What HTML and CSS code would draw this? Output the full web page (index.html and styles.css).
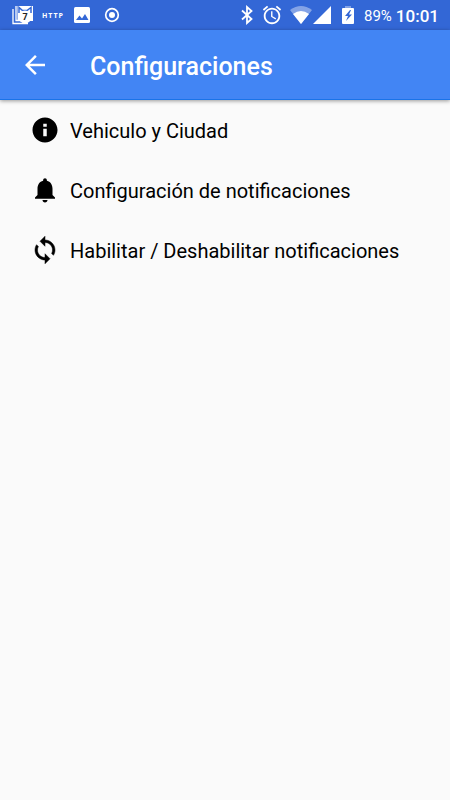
FILE: index.html
```html
<!DOCTYPE html>
<html lang="es">
<head>
    <meta charset="UTF-8">
    <meta name="viewport" content="width=device-width, initial-scale=1.0">
    <title>Configuraciones</title>
    <link rel="stylesheet" href="styles.css">
</head>
<body>
    <div class="status-bar">
        <div class="status-left">
            <svg class="icon-cat" viewBox="0 0 22 20" aria-hidden="true">
                <path d="M1 4v14.500h15" fill="none" stroke="#fff" stroke-width="1.300"/>
                <path d="M4 1v14.500h5" fill="none" stroke="#fff" stroke-width="1.300"/>
                <path d="M5.500 1H21v15H5.500z" fill="#fff"/>
                <path d="M7 8V2.500l3.500 3h4.500l4-3V8" fill="none" stroke="#3367d6" stroke-width="1.500"/>
                <circle cx="13" cy="12" r="6.500" fill="#fff"/>
                <text class="cat-count" x="13" y="15" text-anchor="middle">7</text>
            </svg>
            <span class="http">HTTP</span>
            <svg class="icon-photo" viewBox="0 0 18 18" aria-hidden="true">
                <rect x="1" y="1" width="16" height="16" rx="1.500" fill="#fff"/>
                <path d="M3 14l3.500-4.500 2.500 3 3-4.500 3.500 6z" fill="#3367d6"/>
            </svg>
            <svg class="icon-record" viewBox="0 0 16 16" aria-hidden="true">
                <circle cx="8" cy="8" r="6.300" fill="none" stroke="#fff" stroke-width="1.700"/>
                <circle cx="8" cy="8" r="3" fill="#fff"/>
            </svg>
        </div>
        <div class="status-right">
            <svg class="icon-bluetooth" viewBox="0 0 12 20" aria-hidden="true">
                <path d="M1 5.500l9.500 8.500L6 18V2l4.500 4L1 14.500" fill="none" stroke="#fff" stroke-width="1.800"/>
            </svg>
            <svg class="icon-alarm" viewBox="0 0 24 24" aria-hidden="true">
                <path d="M22 5.720l-4.600-3.860-1.290 1.530 4.600 3.860L22 5.720zM7.880 3.390L6.600 1.860 2 5.710l1.290 1.530 4.590-3.850zM12.500 8H11v6l4.750 2.850.75-1.230-4-2.370V8zM12 4c-4.970 0-9 4.030-9 9s4.020 9 9 9c4.970 0 9-4.030 9-9s-4.030-9-9-9zm0 16c-3.870 0-7-3.130-7-7s3.130-7 7-7 7 3.130 7 7-3.130 7-7 7z" fill="#fff"/>
            </svg>
            <svg class="icon-wifi" viewBox="0 0 24 20" aria-hidden="true">
                <path d="M1 5Q12-3 23 5L12 19z" fill="#fff" opacity=".4"/>
                <path d="M4 9q8-6 16 0l-8 10z" fill="#fff"/>
            </svg>
            <svg class="icon-signal" viewBox="0 0 18 18" aria-hidden="true">
                <path d="M18 0v18H0z" fill="#fff"/>
            </svg>
            <svg class="icon-battery" viewBox="0 0 12 20" aria-hidden="true">
                <path d="M3 1h6v2H3z" fill="#fff" opacity=".4"/>
                <path d="M1 3h10q1 0 1 1v14q0 1-1 1H1q-1 0-1-1V4q0-1 1-1z" fill="#fff"/>
                <path d="M8 5l-5 6h3l-2 5 6-6.500H7L9 5z" fill="#3367d6"/>
            </svg>
            <span class="battery-level">89%</span>
            <span class="clock">10:01</span>
        </div>
    </div>

    <header class="toolbar">
        <button class="back" type="button" aria-label="Volver">
            <svg viewBox="0 0 24 24" aria-hidden="true"><path d="M20 11H7.830l5.590-5.590L12 4l-8 8 8 8 1.410-1.410L7.830 13H20v-2z" fill="#fff"/></svg>
        </button>
        <h1>Configuraciones</h1>
    </header>

    <nav>
        <ul class="settings">
            <li>
                <a href="#vehiculo">
                    <svg viewBox="0 0 24 24" aria-hidden="true"><path d="M12 2C6.480 2 2 6.480 2 12s4.480 10 10 10 10-4.480 10-10S17.520 2 12 2zm1.400 15h-2.800v-6h2.800v6zm0-7.600h-2.800V7h2.800v2.400z"/></svg>
                    <span>Vehiculo y Ciudad</span>
                </a>
            </li>
            <li>
                <a href="#configuracion">
                    <svg viewBox="0 0 24 24" aria-hidden="true"><path d="M12 22c1.100 0 2-.9 2-2h-4c0 1.100.89 2 2 2zm6-6v-5c0-3.070-1.640-5.640-4.500-6.320V4c0-.83-.67-1.500-1.500-1.500s-1.500.67-1.500 1.500v.68C7.630 5.360 6 7.920 6 11v5l-2 2v1h16v-1l-2-2z"/></svg>
                    <span>Configuración de notificaciones</span>
                </a>
            </li>
            <li>
                <a href="#habilitar">
                    <svg viewBox="0 0 24 24" aria-hidden="true"><path d="M12 4V1L8 5l4 4V6c3.310 0 6 2.690 6 6 0 1.010-.25 1.970-.7 2.800l1.460 1.460C19.540 15.030 20 13.570 20 12c0-4.420-3.580-8-8-8zm0 14c-3.310 0-6-2.690-6-6 0-1.010.25-1.970.7-2.800L5.240 7.740C4.460 8.970 4 10.430 4 12c0 4.420 3.580 8 8 8v3l4-4-4-4v3z" stroke="#000" stroke-width=".4"/></svg>
                    <span>Habilitar / Deshabilitar notificaciones</span>
                </a>
            </li>
        </ul>
    </nav>
</body>
</html>
```

FILE: styles.css
```css
* { box-sizing: border-box; }
body { margin: 0; min-height: 100vh; background-color: #fafafa; color: #000; font-family: Roboto, "Noto Sans", sans-serif; }
svg { display: block; flex: none; }

/* status bar */
.status-bar { display: flex; justify-content: space-between; align-items: center; height: 30px; padding: 0 11px 0 12px; background-color: #3367d6; color: #fff; }
.status-left, .status-right { display: flex; align-items: center; }
.icon-cat { width: 22px; height: 20px; }
.cat-count { font-size: 9px; font-weight: bold; fill: #222; }
.http { margin: 0 9px 0 8px; font-family: "Open Sans", sans-serif; font-size: 7px; font-weight: bold; letter-spacing: 1px; }
.icon-photo { width: 18px; height: 18px; margin-right: 13px; }
.icon-record { width: 16px; height: 16px; }
.icon-bluetooth { width: 12px; height: 20px; margin-right: 8px; }
.icon-alarm { width: 22px; height: 22px; margin-right: 6px; }
.icon-wifi { width: 24px; height: 20px; }
.icon-signal { width: 18px; height: 18px; margin-right: 11px; }
.icon-battery { width: 12px; height: 20px; margin-right: 10px; }
.battery-level { margin-right: 4px; font-size: 15px; line-height: 20px; padding-top: 2px; }
.clock { font-size: 17px; font-weight: 500; line-height: 20px; padding-top: 2px; }

/* toolbar */
.toolbar { display: flex; align-items: center; height: 70px; padding: 0 20px; background-color: #4285f4; border-bottom: 1px solid #1a73e8; box-shadow: 0 1px 4px rgba(0, 0, 0, 0.4); color: #fff; }
.toolbar h1 { margin: 0; padding-top: 4px; font-size: 25px; font-weight: 500; line-height: 32px; }
.back { margin: 0 40px 0 0; padding: 0; border: none; background: none; cursor: pointer; }
.back svg { width: 30px; height: 30px; }

/* settings list */
.settings { margin: 0; padding: 0; list-style: none; }
.settings a { display: flex; align-items: center; gap: 10px; height: 60px; padding: 0 30px; color: #000; font-size: 20px; text-decoration: none; white-space: nowrap; }
.settings svg { width: 30px; height: 30px; }
.settings span { padding-top: 2px; }
```
